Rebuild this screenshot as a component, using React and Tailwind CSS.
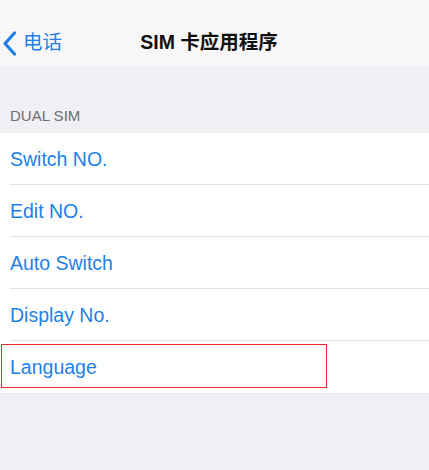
import React from "react";

const rows = ["Switch NO.", "Edit NO.", "Auto Switch", "Display No.", "Language"];

export default function App() {
  return (
    <div
      className="w-[429px] h-[470px] bg-[#efeff4] overflow-hidden"
      style={{ fontFamily: '"Liberation Sans", "Noto Sans CJK SC", Arial, sans-serif' }}
    >
      <div className="h-[66px] bg-[#f7f7f8] pt-[20px] flex items-center relative">
        <div className="absolute left-[2px] top-[20px] h-[46px] flex items-center text-[#1f7fe5]">
          <svg width="15" height="25" viewBox="0 0 15 25" className="mr-[6px]">
            <path d="M12.5 2 L3 12.5 L12.5 23" fill="none" stroke="#1f7fe5" strokeWidth="3.2" strokeLinecap="round" strokeLinejoin="round" />
          </svg>
          <span className="text-[19.5px] leading-none">电话</span>
        </div>
        <div className="flex-1 flex justify-center pr-[11px]">
          <span className="text-[19.5px] font-bold text-[#111] leading-none">SIM 卡应用程序</span>
        </div>
      </div>
      <div className="h-[67px] flex items-end pl-[10px] pb-[10px]">
        <span className="text-[15px] text-[#6d6d72] leading-none">DUAL SIM</span>
      </div>
      <div className="bg-white">
        {rows.map((r, i) => (
          <div key={r} className="relative pl-[10px]">
            <div
              className={
                "h-[52px] flex items-center " +
                (i < rows.length - 1 ? "border-b border-[#e2e2e4]" : "")
              }
            >
              <span className="text-[19.5px] text-[#1f7fe5] leading-none mt-[2px]">{r}</span>
            </div>
            {r === "Language" && (
              <div className="absolute left-[1px] top-[3px] w-[326px] h-[44px] border border-[#e8262b]" />
            )}
          </div>
        ))}
      </div>
      <div className="h-[1px] bg-[#e6e6e8]" />
    </div>
  );
}
